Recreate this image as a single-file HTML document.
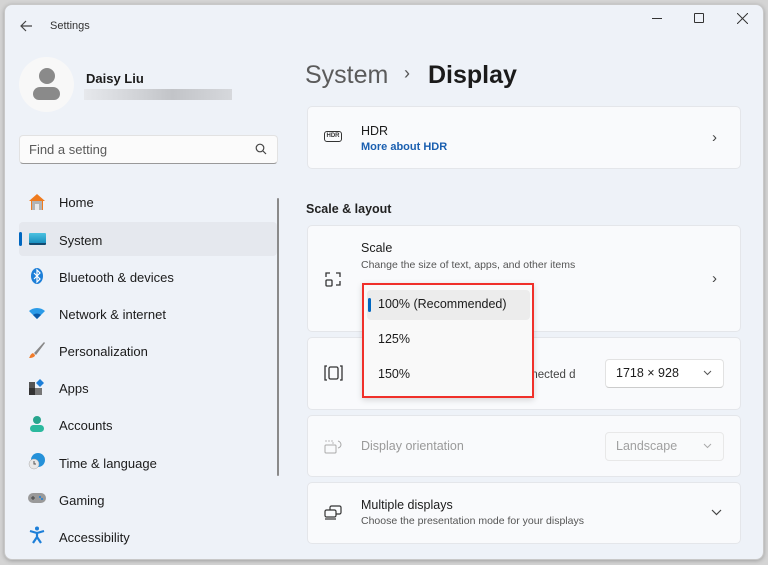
<!DOCTYPE html>
<html><head><meta charset="utf-8"><style>
*{box-sizing:border-box;margin:0;padding:0}
body{width:768px;height:565px;background:#d4d4d4;font-family:"Liberation Sans",sans-serif;position:relative;overflow:hidden;color:#1b1b1b}
.win{position:absolute;left:4px;top:4px;width:760px;height:556px;background:#eef2f8;border-radius:8px;border:1px solid #c8c8c8;box-shadow:0 1px 4px rgba(0,0,0,.25)}
.a{position:absolute}
.t{position:absolute;white-space:nowrap}
.card{position:absolute;left:307px;width:434px;background:#f9fafc;border:1px solid #e4e6ea;border-radius:5px}
.nav{position:absolute;left:59px;font-size:13px;color:#1b1b1b}
.ic{position:absolute;left:28px;width:18px;height:18px}
</style></head><body>
<div class="win"></div>
<svg class="a" style="left:19px;top:19px" width="14" height="14" viewBox="0 0 14 14"><path d="M13 7H2M7 2L2 7l5 5" stroke="#444" stroke-width="1.2" fill="none"/></svg>
<div class="t" style="left:50px;top:20px;font-size:11px;color:#333">Settings</div>
<div class="a" style="left:652px;top:18px;width:10px;height:1px;background:#333"></div>
<div class="a" style="left:694px;top:13px;width:10px;height:10px;border:1px solid #333;border-radius:1px"></div>
<svg class="a" style="left:737px;top:13px" width="11" height="11"><path d="M0 0L11 11M11 0L0 11" stroke="#333" stroke-width="1"/></svg>
<div class="a" style="left:19px;top:57px;width:55px;height:55px;border-radius:50%;background:#f8f8f8"></div>
<div class="a" style="left:39px;top:68px;width:16px;height:16px;border-radius:50%;background:#8a8a8a"></div>
<div class="a" style="left:33px;top:87px;width:27px;height:13px;border-radius:7px 7px 6px 6px;background:#8a8a8a"></div>
<div class="t" style="left:86px;top:71px;font-size:13px;font-weight:bold">Daisy Liu</div>
<div class="a" style="left:84px;top:89px;width:148px;height:11px;background:linear-gradient(90deg,#e6e8ec,#cfd1d5 40%,#c2c4c8 60%,#d6d8dc)"></div>
<div class="a" style="left:19px;top:135px;width:259px;height:29px;background:#fbfbfb;border:1px solid #e2e2e2;border-bottom:1px solid #999;border-radius:4px"></div>
<div class="t" style="left:29px;top:142px;font-size:13px;color:#5a5a5a">Find a setting</div>
<svg class="a" style="left:255px;top:143px" width="12" height="12"><circle cx="5" cy="5" r="3.8" stroke="#444" fill="none" stroke-width="1.2"/><path d="M8 8l3 3" stroke="#444" stroke-width="1.2"/></svg>
<div class="a" style="left:19px;top:222px;width:258px;height:34px;background:#e5e8ee;border-radius:4px"></div>
<div class="a" style="left:19px;top:232px;width:3px;height:14px;background:#0067c0;border-radius:2px"></div>
<div class="a" style="left:277px;top:198px;width:2px;height:278px;background:#8a8a8a;border-radius:1px"></div>
<svg class="ic" style="top:193px" viewBox="0 0 18 18"><path d="M9 1L1 8h2v9h12V8h2z" fill="#ef7b1e"/><rect x="4" y="8" width="10" height="9" fill="#b3b3b3"/><rect x="7" y="11" width="4" height="6" fill="#e9e9e9"/></svg>
<div class="nav" style="top:195px">Home</div>
<div class="a" style="left:29px;top:233px;width:17px;height:12px;background:linear-gradient(#4cc2e0,#1a8fbf);border-bottom:2px solid #134a70;border-radius:1px"></div>
<div class="nav" style="top:233px">System</div>
<svg class="ic" style="top:267px" viewBox="0 0 18 18"><ellipse cx="9" cy="9" rx="6" ry="8" fill="#1d7fd8"/><path d="M6 6l6 6-3 3V3l3 3-6 6" stroke="#fff" fill="none" stroke-width="1.2"/></svg>
<div class="nav" style="top:270px">Bluetooth &amp; devices</div>
<svg class="ic" style="top:304px" viewBox="0 0 18 18"><path d="M1 7a12 12 0 0 1 16 0L9 15z" fill="#2b9be8"/><path d="M5 11a6 6 0 0 1 8 0L9 15z" fill="#0a5aa8"/></svg>
<div class="nav" style="top:307px">Network &amp; internet</div>
<svg class="ic" style="top:341px" viewBox="0 0 18 18"><path d="M16 1L6 12l2 2L17 2z" fill="#888"/><path d="M5 12c-3 1-3 4-4 5 3 0 6-1 6-3z" fill="#f07b2a"/></svg>
<div class="nav" style="top:344px">Personalization</div>
<svg class="ic" style="top:378px" viewBox="0 0 18 18"><rect x="1" y="4" width="6" height="6" fill="#555"/><rect x="1" y="10" width="6" height="7" fill="#333"/><rect x="7" y="10" width="7" height="7" fill="#777"/><path d="M12 1l4 4-4 4-4-4z" fill="#1d7fd8"/></svg>
<div class="nav" style="top:381px">Apps</div>
<svg class="ic" style="top:415px" viewBox="0 0 18 18"><circle cx="9" cy="5" r="4" fill="#27a58e"/><rect x="2" y="10" width="14" height="7" rx="3.5" fill="#2bb99e"/></svg>
<div class="nav" style="top:418px">Accounts</div>
<svg class="ic" style="top:452px" viewBox="0 0 18 18"><circle cx="10" cy="8" r="7" fill="#2591d9"/><circle cx="6" cy="12" r="5" fill="#e8e8e8" stroke="#aaa" stroke-width=".5"/><path d="M6 9v3h2" stroke="#555" fill="none"/></svg>
<div class="nav" style="top:456px">Time &amp; language</div>
<svg class="ic" style="top:489px" viewBox="0 0 18 18"><rect x="0" y="4" width="18" height="10" rx="5" fill="#9a9a9a"/><path d="M3 9h4M5 7v4" stroke="#444"/><circle cx="12" cy="8" r="1" fill="#1d7fd8"/><circle cx="14" cy="10" r="1" fill="#1d7fd8"/></svg>
<div class="nav" style="top:493px">Gaming</div>
<svg class="ic" style="top:526px" viewBox="0 0 18 18"><circle cx="9" cy="2.5" r="2" fill="#1d7fd8"/><path d="M2 5l7 2 7-2M9 7v4l-4 6M9 11l4 6" stroke="#1d7fd8" stroke-width="2.2" fill="none"/></svg>
<div class="nav" style="top:530px">Accessibility</div>
<div class="t" style="left:305px;top:61px;font-size:25px;color:#5b5b5b">System</div>
<div class="t" style="left:404px;top:63px;font-size:18px;color:#555">›</div>
<div class="t" style="left:428px;top:61px;font-size:25px;font-weight:bold;color:#1b1b1b">Display</div>
<div class="card" style="top:106px;height:63px"></div>
<div class="a" style="left:324px;top:131px;width:18px;height:11px;border:1.3px solid #333;border-radius:3px;font-size:6px;font-weight:bold;text-align:center;line-height:8px;color:#333">HDR</div>
<div class="t" style="left:361px;top:124px;font-size:12.5px">HDR</div>
<div class="t" style="left:361px;top:141px;font-size:11px;font-weight:bold;color:#1a5fb0">More about HDR</div>
<div class="t" style="left:712px;top:129px;font-size:15px;color:#444">›</div>
<div class="t" style="left:306px;top:202px;font-size:12.5px;font-weight:bold;color:#222">Scale &amp; layout</div>
<div class="card" style="top:225px;height:107px"></div>
<svg class="a" style="left:324px;top:270px" width="18" height="18"><path d="M2 7V3h4M12 3h4v4M16 11v4h-4" stroke="#333" fill="none" stroke-width="1.3"/><rect x="2" y="10" width="6" height="6" rx="1" stroke="#333" fill="none" stroke-width="1.3"/></svg>
<div class="t" style="left:361px;top:241px;font-size:12.5px">Scale</div>
<div class="t" style="left:361px;top:259px;font-size:10.5px;color:#555">Change the size of text, apps, and other items</div>
<div class="t" style="left:712px;top:270px;font-size:15px;color:#444">›</div>
<div class="card" style="top:337px;height:73px"></div>
<svg class="a" style="left:324px;top:365px" width="19" height="16"><path d="M3 1H1v14h2M16 1h2v14h-2" stroke="#333" fill="none" stroke-width="1.3"/><rect x="5" y="2" width="9" height="12" rx="1.5" stroke="#333" fill="none" stroke-width="1.3"/></svg>
<div class="t" style="left:525px;top:369px;font-size:11.5px;color:#444">nnected d</div>
<div class="a" style="left:605px;top:359px;width:119px;height:29px;background:#fff;border:1px solid #e2e2e2;border-bottom-color:#ccc;border-radius:4px"></div>
<div class="t" style="left:616px;top:366px;font-size:12.5px">1718 × 928</div>
<svg class="a" style="left:703px;top:370px" width="9" height="6"><path d="M1 1l3.5 3.5L8 1" stroke="#555" fill="none"/></svg>
<div class="card" style="top:415px;height:62px"></div>
<svg class="a" style="left:324px;top:438px" width="20" height="16"><path d="M1 3h8v4" stroke="#bbb" stroke-dasharray="2 1" fill="none"/><rect x="1" y="7" width="11" height="8" rx="1" stroke="#aaa" fill="none"/><path d="M14 3a4 4 0 0 1 3 4 4 4 0 0 1-3 3" stroke="#aaa" fill="none"/></svg>
<div class="t" style="left:361px;top:439px;font-size:12.5px;color:#9a9a9a">Display orientation</div>
<div class="a" style="left:605px;top:432px;width:119px;height:29px;background:#f9fafb;border:1px solid #e8e8e8;border-radius:4px"></div>
<div class="t" style="left:616px;top:439px;font-size:12.5px;color:#a0a0a0">Landscape</div>
<svg class="a" style="left:703px;top:443px" width="9" height="6"><path d="M1 1l3.5 3.5L8 1" stroke="#aaa" fill="none"/></svg>
<div class="card" style="top:482px;height:62px"></div>
<svg class="a" style="left:324px;top:505px" width="18" height="15"><rect x="6" y="1" width="11" height="8" rx="1.5" stroke="#333" fill="#f9fafc" stroke-width="1.2"/><rect x="1" y="5" width="11" height="7" rx="1.5" stroke="#333" fill="#f9fafc" stroke-width="1.2"/><path d="M1 14h11" stroke="#333" stroke-width="1.2"/></svg>
<div class="t" style="left:361px;top:498px;font-size:12.5px">Multiple displays</div>
<div class="t" style="left:361px;top:515px;font-size:10.5px;color:#555">Choose the presentation mode for your displays</div>
<svg class="a" style="left:711px;top:509px" width="11" height="7"><path d="M1 1l4.5 4.5L10 1" stroke="#444" fill="none" stroke-width="1.2"/></svg>
<div class="a" style="left:362px;top:283px;width:172px;height:115px;background:#f9f9f9;border:2px solid #f0302a;box-shadow:0 2px 6px rgba(0,0,0,.15)"></div>
<div class="a" style="left:367px;top:290px;width:163px;height:30px;background:#ececec;border-radius:4px"></div>
<div class="a" style="left:368px;top:298px;width:3px;height:14px;background:#0067c0;border-radius:2px"></div>
<div class="t" style="left:378px;top:297px;font-size:12.5px">100% (Recommended)</div>
<div class="t" style="left:378px;top:332px;font-size:12.5px">125%</div>
<div class="t" style="left:378px;top:367px;font-size:12.5px">150%</div>
</body></html>
